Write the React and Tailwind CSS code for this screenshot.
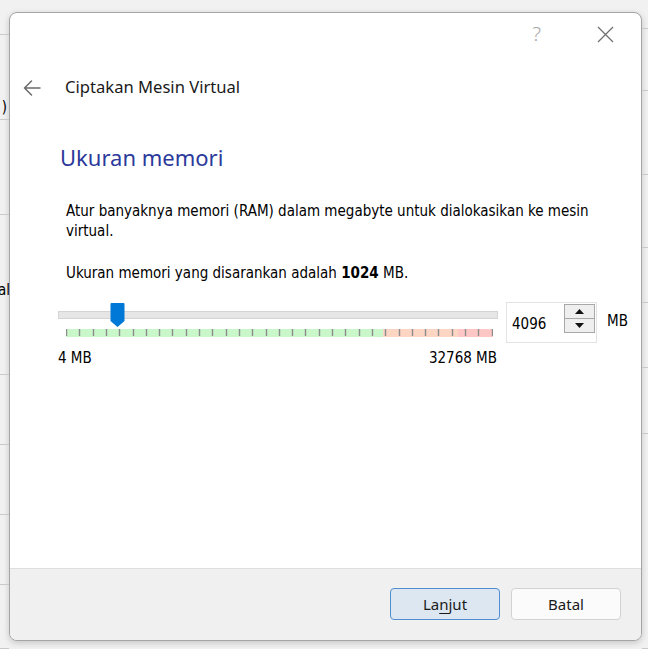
import React from "react";

const ticks = Array.from({ length: 33 }, (_, i) => i);

function Scale() {
  const w = 427;
  return (
    <svg width={w} height="9" viewBox={`0 0 ${w} 9`} className="block">
      <rect x="0" y="1" width="317" height="8" fill="#c9f7c9" />
      <rect x="317" y="1" width="75" height="8" fill="#fdd5c3" />
      <rect x="392" y="1" width="35" height="8" fill="#ffc6c6" />
      {ticks.map((i) => {
        const x = Math.round(i * 13.3) + 0.5;
        return <line key={i} x1={x} x2={x} y1="1" y2="8" stroke="#8c8c8c" strokeWidth="1.4" />;
      })}
    </svg>
  );
}

const tahoma = { fontFamily: "'DejaVu Sans Condensed', 'DejaVu Sans', sans-serif" };

export default function App() {
  const leftRows = [35, 85, 95, 160, 70, 70, 70, 64];
  const rightRows = [29, 62, 84, 73, 55, 65, 66, 215];
  return (
    <div
      className="w-[648px] h-[649px] bg-[#f1f1f1] flex overflow-hidden"
      style={{ fontFamily: "'Noto Sans', sans-serif" }}
    >
      <div className="w-[9px] shrink-0 flex flex-col">
        {leftRows.map((h, i) => (
          <div key={i} style={{ height: h }} className="border-b border-[#c9c9c9] shrink-0 relative">
            {i === 1 && (
              <span className="absolute right-[2px] top-[65px] text-[15px] leading-none text-black" style={tahoma}>)</span>
            )}
            {i === 3 && (
              <span className="absolute -right-[1px] top-[68px] text-[15px] leading-none text-black" style={tahoma}>al</span>
            )}
          </div>
        ))}
      </div>

      <div className="mt-[12px] w-[633px] h-[629px] shrink-0 rounded-[8px] border border-[#a5a5a5] bg-white flex flex-col overflow-hidden shadow-[0_2px_6px_rgba(0,0,0,0.18)]">
        {/* title bar */}
        <div className="h-[40px] flex items-center justify-end pr-[27px] gap-[56px]">
          <span className="text-[20px] text-[#a8a8a8] leading-none mt-[1px] font-light">?</span>
          <svg width="17" height="17" viewBox="0 0 17 17" className="mt-[2px]">
            <path d="M1 1 L16 16 M16 1 L1 16" stroke="#707070" strokeWidth="1.3" fill="none" />
          </svg>
        </div>
        {/* header */}
        <div className="h-[70px] flex items-center pl-[13px]">
          <svg width="18" height="16" viewBox="0 0 18 16">
            <path d="M17 8 H1.5 M8.5 1 L1.5 8 L8.5 15" stroke="#6b6b6b" strokeWidth="1.5" fill="none" strokeLinejoin="round" strokeLinecap="round" />
          </svg>
          <span className="ml-[24px] text-[16.6px] text-[#1a1a1a] mb-[2px]">Ciptakan Mesin Virtual</span>
        </div>

        <div className="flex-1 flex flex-col">
          <div className="pl-[50px] pt-[20px] text-[22px] leading-[28px] text-[#2b3a9b]">Ukuran memori</div>

          <div className="pl-[56px] pr-[26px] mt-[30px] text-[15px] leading-[20px] text-black" style={tahoma}>
            <p>Atur banyaknya memori (RAM) dalam megabyte untuk dialokasikan ke mesin virtual.</p>
            <p className="mt-[22px]">
              Ukuran memori yang disarankan adalah <b>1024</b> MB.
            </p>

            <div className="flex mt-[18px] -ml-[8px] -mr-[20px]">
              <div className="w-[440px] shrink-0 flex flex-col">
                <div className="relative h-[27px] pt-[10px]">
                  <div className="h-[8px] bg-[#e6e6e6] border border-[#d4d4d4]" />
                  <svg width="15" height="25" viewBox="0 0 15 25" className="absolute left-[52px] top-[2px]">
                    <path d="M1.5 0 H13.5 Q14.5 0 14.5 1 V18 L7.5 24 L0.5 18 V1 Q0.5 0 1.5 0 Z" fill="#0078d7" />
                  </svg>
                </div>
                <div className="pl-[8px]">
                  <Scale />
                </div>
                <div className="flex justify-between mt-[11px] pr-[1px]">
                  <span>4 MB</span>
                  <span>32768 MB</span>
                </div>
              </div>

              <div className="ml-[8px] mt-[1px] w-[91px] h-[41px] shrink-0 border border-[#e3e3e3] bg-white flex items-center pl-[5px] pr-[1px]">
                <span className="flex-1 mt-[2px]">4096</span>
                <div className="flex flex-col w-[31px] h-[29px] mb-[9px] border border-[#a8a8a8] bg-[#efefef]">
                  <div className="flex-1 flex items-center justify-center border-b border-[#a8a8a8]">
                    <svg width="9" height="5" viewBox="0 0 9 5"><path d="M0 5 L4.5 0 L9 5 Z" fill="#111" /></svg>
                  </div>
                  <div className="flex-1 flex items-center justify-center">
                    <svg width="9" height="5" viewBox="0 0 9 5"><path d="M0 0 L4.5 5 L9 0 Z" fill="#111" /></svg>
                  </div>
                </div>
              </div>
              <span className="ml-[10px] mt-[10px] shrink-0">MB</span>
            </div>
          </div>
        </div>

        {/* footer */}
        <div className="h-[72px] bg-[#f0f0f0] border-t border-[#dedede] flex items-start justify-end pt-[19px] pr-[20px] gap-[11px]">
          <button className="w-[110px] h-[32px] rounded-[4px] border border-[#4f8fd0] bg-[#dce7f2] text-[15px] text-[#1a1a1a]">
            La<span className="underline underline-offset-[3px]">n</span>jut
          </button>
          <button className="w-[110px] h-[32px] rounded-[4px] border border-[#d2d2d2] bg-[#fbfbfb] text-[15px] text-[#1a1a1a]">
            Batal
          </button>
        </div>
      </div>

      <div className="flex-1 flex flex-col">
        {rightRows.map((h, i) => (
          <div key={i} style={{ height: h }} className="border-b border-[#c9c9c9] shrink-0" />
        ))}
      </div>
    </div>
  );
}
